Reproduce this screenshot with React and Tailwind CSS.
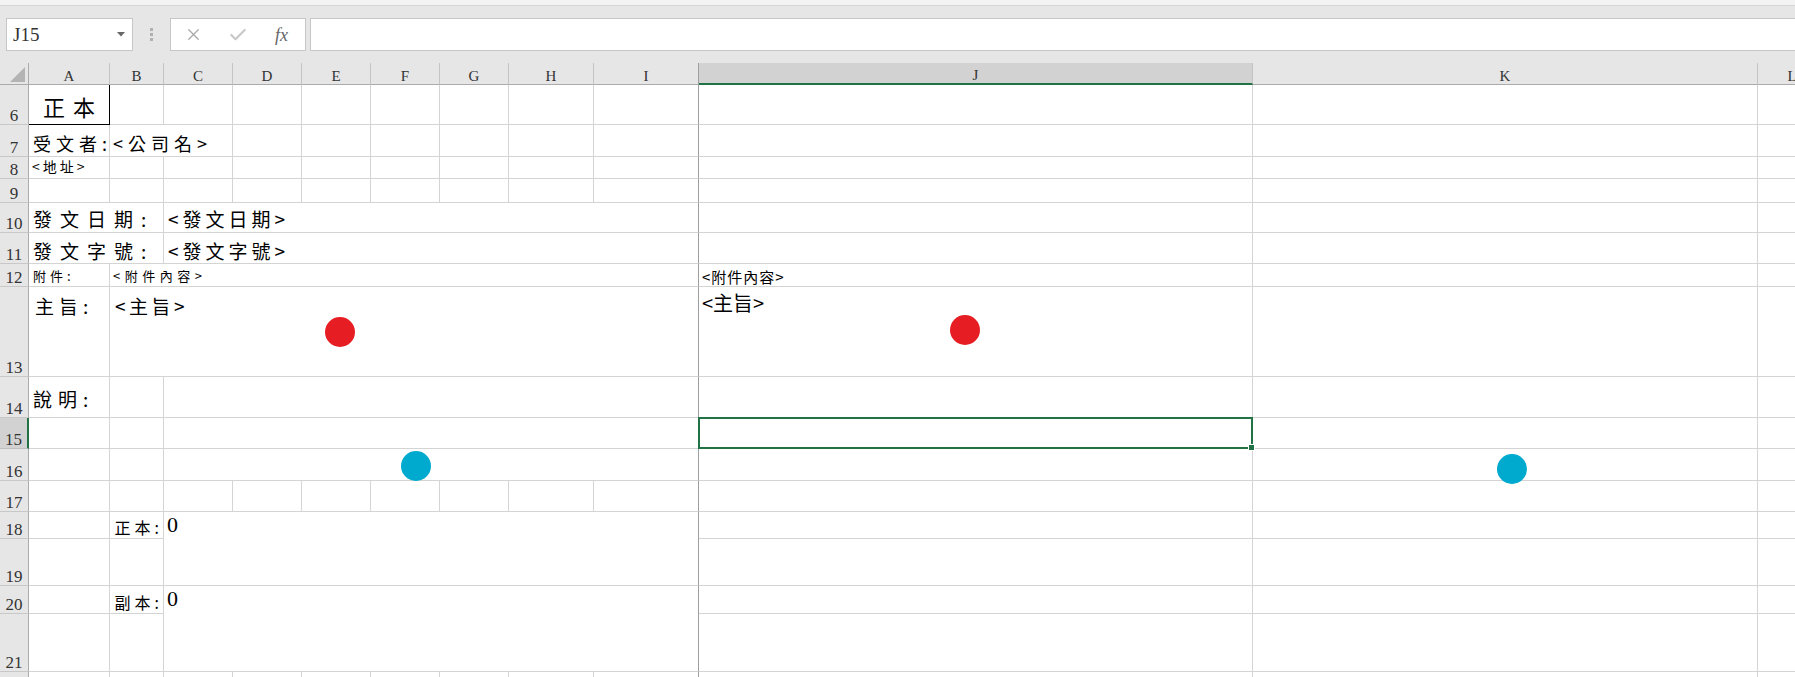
import { X, Check } from "lucide-react";

const cols = ["A", "B", "C", "D", "E", "F", "G", "H", "I", "J", "K", "L"];

function RowHead({ n, active }) {
  return (
    <div
      className={`flex items-end justify-center border-b font-['Liberation_Serif',serif] text-[17px] leading-none text-[#333] ${
        active
          ? "bg-[#d2d2d2] border-b-[#bfbfbf] border-r-2 border-r-[#217346]"
          : "bg-[#e6e6e6] border-b-[#c8c8c8] border-r border-r-[#ababab]"
      }`}
    >
      {n}
    </div>
  );
}

function Cell({ className = "", edge, children }) {
  return (
    <div
      className={`relative min-w-0 border-r border-b border-[#d4d4d4] ${edge ? "border-r-[#9e9e9e]" : ""} ${className}`}
    >
      {children}
    </div>
  );
}

function Txt({ className = "", children }) {
  return (
    <span className={`whitespace-nowrap font-['Noto_Sans_CJK_TC',sans-serif] leading-none text-black ${className}`}>
      {children}
    </span>
  );
}

// plain cells D..H and I (freeze edge)
function DtoI() {
  return (
    <>
      <Cell />
      <Cell />
      <Cell />
      <Cell />
      <Cell />
      <Cell edge />
    </>
  );
}

function Right({ j, jClass = "", sel }) {
  return (
    <>
      <Cell className={jClass}>
        {j}
        {sel && (
          <div className="absolute -left-[1px] -top-[1px] -right-[1px] -bottom-[1px] z-10 border-2 border-[#217346]">
            <div className="absolute -right-[4px] -bottom-[4px] w-[7px] h-[7px] bg-[#217346] border border-white" />
          </div>
        )}
      </Cell>
      <Cell />
      <Cell />
    </>
  );
}

function Dot({ className }) {
  return <div className={`absolute z-20 w-[30px] h-[30px] rounded-full ${className}`} />;
}

export default function App() {
  return (
    <div className="relative w-[1795px] h-[677px] overflow-hidden bg-white">
      {/* top strip */}
      <div className="h-[6px] bg-[#f3f3f3] border-b border-[#d5d5d5]" />

      {/* formula bar */}
      <div className="h-[57px] bg-[#e6e6e6] flex items-start pt-[12px]">
        <div className="ml-[6px] w-[127px] h-[33px] bg-white border border-[#c6c6c6] flex items-center justify-between pl-[6px] pr-[7px]">
          <span className="font-['Liberation_Serif',serif] text-[19px] leading-none text-[#333]">J15</span>
          <svg width="8" height="5" viewBox="0 0 8 5">
            <polygon points="0,0 8,0 4,4.5" fill="#666" />
          </svg>
        </div>
        <div className="ml-[17px] mt-[10px] flex flex-col gap-[2px]">
          <div className="w-[3px] h-[3px] bg-[#b0b0b0]" />
          <div className="w-[3px] h-[3px] bg-[#b0b0b0]" />
          <div className="w-[3px] h-[3px] bg-[#b0b0b0]" />
        </div>
        <div className="ml-[17px] w-[136px] h-[33px] bg-white border border-[#c6c6c6] flex items-center pl-[13px]">
          <X size={19} strokeWidth={1.6} color="#a8a8a8" />
          <Check size={20} strokeWidth={2.6} color="#c8c8c8" className="ml-[25px]" />
          <span className="ml-[27px] font-['Liberation_Serif',serif] italic text-[18px] leading-none text-[#666]">fx</span>
        </div>
        <div className="ml-[4px] flex-1 h-[33px] bg-white border border-r-0 border-[#c6c6c6]" />
      </div>

      {/* sheet */}
      <div className="grid w-max grid-cols-[29px_81px_54px_69px_69px_69px_69px_69px_85px_105px_554px_505px_69px] grid-rows-[22px_40px_32px_22px_24px_30px_31px_23px_90px_41px_31px_32px_31px_27px_47px_28px_58px_20px]">
        {/* column headers */}
        <div className="relative bg-[#e6e6e6] border-r border-b border-[#ababab]">
          <svg className="absolute left-0 top-0" width="29" height="22">
            <polygon points="10,19 25,19 25,4" fill="#b4b4b4" />
          </svg>
        </div>
        {cols.map((c) => (
          <div
            key={c}
            className={`flex items-end justify-center border-r font-['Liberation_Serif',serif] text-[15px] leading-none text-[#333] ${
              c === "I" ? "border-r-[#9e9e9e]" : "border-r-[#c4c4c4]"
            } ${c === "J" ? "bg-[#d2d2d2] border-b-2 border-b-[#217346]" : "bg-[#e6e6e6] border-b border-b-[#ababab]"}`}
          >
            {c}
          </div>
        ))}

        {/* 6 */}
        <RowHead n={6} />
        <Cell className="flex items-end justify-center pb-[7px] pl-[8px] border-r-black border-b-black">
          <Txt className="text-[22px] tracking-[8px]">正本</Txt>
        </Cell>
        <Cell />
        <Cell />
        <DtoI />
        <Right />

        {/* 7 */}
        <RowHead n={7} />
        <Cell className="flex items-end pl-[4px] pb-[4px]">
          <Txt className="text-[18px] tracking-[5px]">受文者:</Txt>
        </Cell>
        <Cell className="col-span-2 flex items-end pl-[3px] pb-[4px]">
          <Txt className="text-[18px] tracking-[5px]">&lt;公司名&gt;</Txt>
        </Cell>
        <DtoI />
        <Right />

        {/* 8 */}
        <RowHead n={8} />
        <Cell className="flex items-end pl-[3px] pb-[5px]">
          <Txt className="text-[14px] tracking-[3px]">&lt;地址&gt;</Txt>
        </Cell>
        <Cell />
        <Cell />
        <DtoI />
        <Right />

        {/* 9 */}
        <RowHead n={9} />
        <Cell />
        <Cell />
        <Cell />
        <DtoI />
        <Right />

        {/* 10 */}
        <RowHead n={10} />
        <Cell className="col-span-2 flex items-end pl-[4px] pb-[4px]">
          <Txt className="text-[19px] tracking-[8px]">發文日期:</Txt>
        </Cell>
        <Cell edge className="col-span-7 flex items-end pl-[4px] pb-[4px]">
          <Txt className="text-[19px] tracking-[4px]">&lt;發文日期&gt;</Txt>
        </Cell>
        <Right />

        {/* 11 */}
        <RowHead n={11} />
        <Cell className="col-span-2 flex items-end pl-[4px] pb-[3px]">
          <Txt className="text-[19px] tracking-[8px]">發文字號:</Txt>
        </Cell>
        <Cell edge className="col-span-7 flex items-end pl-[4px] pb-[3px]">
          <Txt className="text-[19px] tracking-[4px]">&lt;發文字號&gt;</Txt>
        </Cell>
        <Right />

        {/* 12 */}
        <RowHead n={12} />
        <Cell className="flex items-end pl-[4px] pb-[4px]">
          <Txt className="text-[13px] tracking-[4px]">附件:</Txt>
        </Cell>
        <Cell edge className="col-span-8 flex items-end pl-[3px] pb-[4px]">
          <Txt className="text-[13px] tracking-[4.5px]">&lt;附件內容&gt;</Txt>
        </Cell>
        <Right
          jClass="flex items-end pl-[3px] pb-[2px]"
          j={<Txt className="text-[15px] tracking-[1px] text-[#3c3c3c]">&lt;附件內容&gt;</Txt>}
        />

        {/* 13 */}
        <RowHead n={13} />
        <Cell className="flex items-start pl-[6px] pt-[9px]">
          <Txt className="text-[19px] tracking-[5px]">主旨:</Txt>
        </Cell>
        <Cell edge className="col-span-8 flex items-start pl-[5px] pt-[9px]">
          <Txt className="text-[19px] tracking-[3.5px]">&lt;主旨&gt;</Txt>
        </Cell>
        <Right jClass="flex items-start pl-[3px] pt-[6px]" j={<Txt className="text-[20px]">&lt;主旨&gt;</Txt>} />

        {/* 14 */}
        <RowHead n={14} />
        <Cell className="flex items-end pl-[4px] pb-[9px]">
          <Txt className="text-[19px] tracking-[6px]">說明:</Txt>
        </Cell>
        <Cell />
        <Cell edge className="col-span-7" />
        <Right />

        {/* 15 */}
        <RowHead n={15} active />
        <Cell />
        <Cell />
        <Cell edge className="col-span-7" />
        <Right sel />

        {/* 16 */}
        <RowHead n={16} />
        <Cell />
        <Cell />
        <Cell edge className="col-span-7" />
        <Right />

        {/* 17 */}
        <RowHead n={17} />
        <Cell />
        <Cell />
        <Cell />
        <DtoI />
        <Right />

        {/* 18 */}
        <RowHead n={18} />
        <Cell />
        <Cell className="flex items-end justify-end pb-[3px]">
          <Txt className="text-[16px] tracking-[4px]">正本:</Txt>
        </Cell>
        <Cell edge className="col-span-7 row-span-2 pl-[3px] pt-[2px]">
          <span className="font-['Liberation_Serif',serif] text-[22px] leading-none text-black">0</span>
        </Cell>
        <Right />

        {/* 19 */}
        <RowHead n={19} />
        <Cell />
        <Cell />
        <Right />

        {/* 20 */}
        <RowHead n={20} />
        <Cell />
        <Cell className="flex items-end justify-end pb-[3px]">
          <Txt className="text-[16px] tracking-[4px]">副本:</Txt>
        </Cell>
        <Cell edge className="col-span-7 row-span-2 pl-[3px] pt-[2px]">
          <span className="font-['Liberation_Serif',serif] text-[22px] leading-none text-black">0</span>
        </Cell>
        <Right />

        {/* 21 */}
        <RowHead n={21} />
        <Cell />
        <Cell />
        <Right />

        {/* 22 */}
        <RowHead n={22} />
        <Cell />
        <Cell />
        <Cell />
        <DtoI />
        <Right />
      </div>

      {/* shapes on the sheet */}
      <Dot className="left-[325px] top-[317px] bg-[#e61e24]" />
      <Dot className="left-[950px] top-[315px] bg-[#e61e24]" />
      <Dot className="left-[401px] top-[451px] bg-[#00aacf]" />
      <Dot className="left-[1497px] top-[454px] bg-[#00aacf]" />
    </div>
  );
}
